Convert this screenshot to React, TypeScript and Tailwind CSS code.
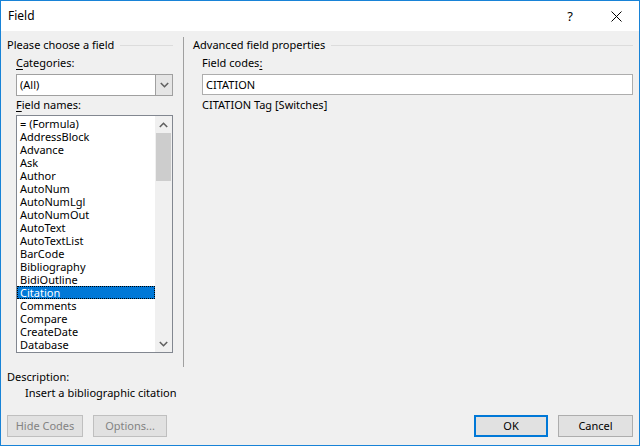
import React from "react";

const items = [
  "= (Formula)",
  "AddressBlock",
  "Advance",
  "Ask",
  "Author",
  "AutoNum",
  "AutoNumLgl",
  "AutoNumOut",
  "AutoText",
  "AutoTextList",
  "BarCode",
  "Bibliography",
  "BidiOutline",
  "Citation",
  "Comments",
  "Compare",
  "CreateDate",
  "Database",
];

function Chevron({ up = false, className = "" }: { up?: boolean; className?: string }) {
  return (
    <svg width="9" height="6" viewBox="0 0 9 6" className={className}>
      {up ? (
        <path d="M0.8 5 L4.5 1.3 L8.2 5" fill="none" stroke="#606060" strokeWidth="1.6" />
      ) : (
        <path d="M0.8 1 L4.5 4.7 L8.2 1" fill="none" stroke="#606060" strokeWidth="1.6" />
      )}
    </svg>
  );
}

export default function App() {
  return (
    <div
      className="w-[640px] h-[446px] border border-[#1883d7] flex flex-col bg-[#f0f0f0] text-[11px] leading-[16px] text-black overflow-hidden"
      style={{ fontFamily: '"Segoe UI", "Noto Sans", "Liberation Sans", sans-serif' }}
    >
      {/* Title bar */}
      <div className="h-[30px] bg-white flex items-center shrink-0">
        <div className="pl-[7px] text-[12px] flex-1">Field</div>
        <div className="w-[46px] flex justify-center text-[13px]">?</div>
        <div className="w-[46px] flex justify-center items-center">
          <svg width="11" height="11" viewBox="0 0 11 11">
            <path d="M0.5 0.5 L10.5 10.5 M10.5 0.5 L0.5 10.5" stroke="#000" strokeWidth="1" />
          </svg>
        </div>
      </div>

      {/* Main */}
      <div className="flex-1 flex flex-col">
        <div className="flex mt-[6px] h-[330px]">
          {/* Left column */}
          <div className="w-[182px] pl-[6px] pr-[10px] flex flex-col">
            <div className="h-[16px] flex items-center gap-[6px]">
              <span className="whitespace-nowrap">Please choose a field</span>
              <div className="flex-1 h-px bg-[#dcdcdc]" />
            </div>
            <div className="ml-[9px] mt-[2px] h-[16px]">
              <span className="underline underline-offset-2">C</span>ategories:
            </div>
            <div className="ml-[9px] mt-[3px] h-[22px] flex border border-[#a0a0a0] bg-white">
              <div className="flex-1 pl-[3px] flex items-center">(All)</div>
              <div className="w-[17px] bg-[#e5e5e5] border-l border-[#a0a0a0] flex items-center justify-center">
                <Chevron />
              </div>
            </div>
            <div className="ml-[9px] mt-[1px] h-[16px]">
              <span className="underline underline-offset-2">F</span>ield names:
            </div>
            <div className="ml-[9px] mt-[2px] h-[238px] border border-[#828790] bg-white flex">
              <div className="flex-1 pt-[1px] leading-[13px]">
                {items.map((it) => (
                  <div
                    key={it}
                    className={
                      it === "Citation"
                        ? "h-[13px] pl-[3px] bg-[#0078d7] text-white outline outline-1 outline-dotted outline-[#000] -outline-offset-1"
                        : "h-[13px] pl-[3px]"
                    }
                  >
                    {it}
                  </div>
                ))}
              </div>
              <div className="w-[17px] bg-[#f0f0f0] flex flex-col">
                <div className="h-[17px] flex items-center justify-center">
                  <Chevron up />
                </div>
                <div className="h-[48px] mx-[1px] bg-[#cdcdcd]" />
                <div className="flex-1" />
                <div className="h-[17px] flex items-center justify-center">
                  <Chevron />
                </div>
              </div>
            </div>
          </div>

          {/* Separator */}
          <div className="w-px bg-[#a0a0a0]" />

          {/* Right column */}
          <div className="flex-1 pl-[9px] pr-[6px] flex flex-col">
            <div className="h-[16px] flex items-center gap-[6px]">
              <span className="whitespace-nowrap">Advanced field properties</span>
              <div className="flex-1 h-px bg-[#dcdcdc]" />
            </div>
            <div className="ml-[9px] mt-[2px] h-[16px]">
              Field codes<span className="underline underline-offset-2">:</span>
            </div>
            <div className="ml-[9px] mt-[3px] h-[21px] border border-[#adadad] bg-white flex items-center pl-[3px]">
              CITATION
            </div>
            <div className="ml-[9px] mt-[2px] h-[16px]">CITATION Tag [Switches]</div>
          </div>
        </div>

        {/* Description */}
        <div className="pl-[6px] mt-[2px] h-[16px]">Description:</div>
        <div className="pl-[24px] h-[16px]">Insert a bibliographic citation</div>

        {/* Buttons */}
        <div className="mt-[14px] h-[22px] flex px-[6px]">
          <div className="w-[76px] border border-[#bfbfbf] bg-[#e1e1e1] text-[#838383] flex items-center justify-center">
            Hide Codes
          </div>
          <div className="ml-[10px] w-[74px] border border-[#bfbfbf] bg-[#e1e1e1] text-[#838383] flex items-center justify-center">
            Options...
          </div>
          <div className="flex-1" />
          <div className="w-[74px] border-2 border-[#0078d7] bg-[#e1e1e1] flex items-center justify-center">
            OK
          </div>
          <div className="ml-[10px] w-[75px] border border-[#adadad] bg-[#e1e1e1] flex items-center justify-center">
            Cancel
          </div>
        </div>
      </div>
    </div>
  );
}
